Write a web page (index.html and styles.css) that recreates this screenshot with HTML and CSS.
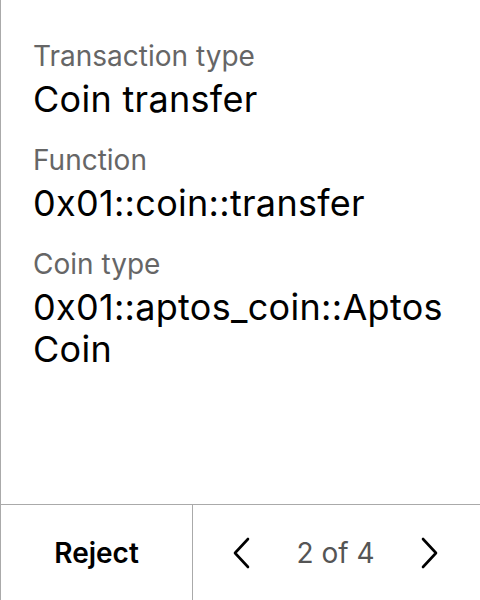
FILE: index.html
```html
<!DOCTYPE html>
<html>
<head>
<meta charset="utf-8">
<link rel="stylesheet" href="styles.css">
</head>
<body>
<div class="screen">
  <div class="content">
    <div class="field">
      <div class="label">Transaction type</div>
      <div class="value">Coin transfer</div>
    </div>
    <div class="field">
      <div class="label">Function</div>
      <div class="value">0x01::coin::transfer</div>
    </div>
    <div class="field">
      <div class="label">Coin type</div>
      <div class="value">0x01::aptos_coin::Aptos<br>Coin</div>
    </div>
  </div>
  <div class="footer">
    <div class="reject">Reject</div>
    <div class="pager">
      <svg class="chev" width="18" height="32" viewBox="0 0 18 32"><polyline points="15,2 2,16 15,30" fill="none" stroke="#000" stroke-width="2.6" stroke-linecap="round" stroke-linejoin="round"/></svg>
      <span class="count">2 of 4</span>
      <svg class="chev" width="18" height="32" viewBox="0 0 18 32"><polyline points="3,2 16,16 3,30" fill="none" stroke="#000" stroke-width="2.6" stroke-linecap="round" stroke-linejoin="round"/></svg>
    </div>
  </div>
</div>
</body>
</html>
```
FILE: styles.css
```css
html, body {
  margin: 0;
  padding: 0;
  background: #fff;
}
body {
  font-family: Inter, "Noto Sans", sans-serif;
  color: #000;
}
.screen {
  width: 479px;
  height: 600px;
  border-left: 1px solid #aaa;
  display: flex;
  flex-direction: column;
}
.content {
  flex: 1;
  padding: 38px 32px 0 32px;
}
.field {
  margin-bottom: 22px;
}
.label {
  font-size: 28px;
  line-height: 36px;
  color: #666;
  margin-bottom: 4px;
}
.value {
  font-size: 36px;
  line-height: 42px;
  letter-spacing: 0.3px;
  color: #000;
}
.footer {
  height: 95px;
  border-top: 1px solid #aaa;
  display: flex;
}
.reject {
  width: 191px;
  border-right: 1px solid #aaa;
  display: flex;
  align-items: center;
  justify-content: center;
  font-size: 28px;
  font-weight: 600;
}
.pager {
  flex: 1;
  display: flex;
  align-items: center;
  justify-content: space-between;
  padding: 0 42px 0 40px;
}
.count {
  font-size: 28px;
  color: #555;
}
.chev {
  display: block;
}
```
